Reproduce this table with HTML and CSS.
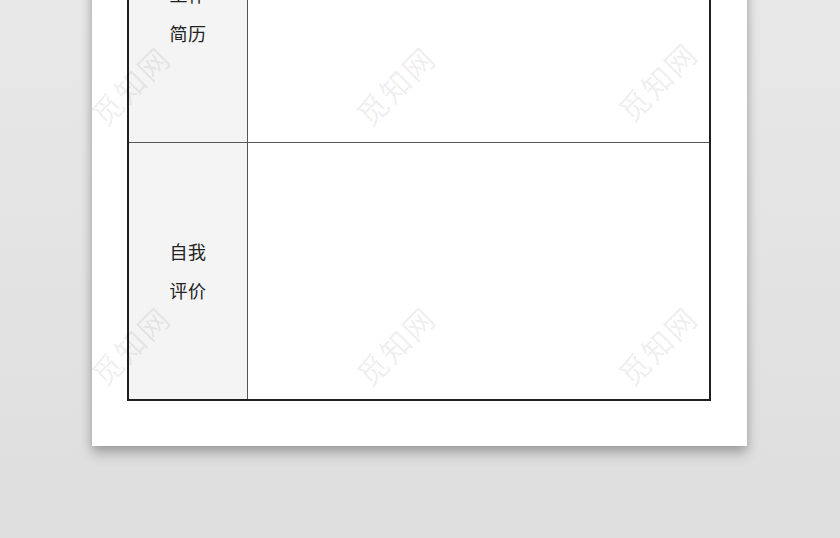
FILE: index.html
```html
<!DOCTYPE html>
<html lang="zh-CN">
<head>
<meta charset="utf-8">
<title>简历</title>
<link rel="stylesheet" href="styles.css">
</head>
<body>
<div class="stage">
  <div class="paper">
    <div class="table">
      <div class="row row-work">
        <div class="label"><span>工作</span><span>简历</span></div>
        <div class="content"></div>
      </div>
      <div class="row row-self">
        <div class="label"><span>自我</span><span>评价</span></div>
        <div class="content"></div>
      </div>
    </div>
    <span class="wm wm1">觅知网</span>
    <span class="wm wm2">觅知网</span>
    <span class="wm wm3">觅知网</span>
    <span class="wm wm4">觅知网</span>
    <span class="wm wm5">觅知网</span>
    <span class="wm wm6">觅知网</span>
  </div>
</div>
</body>
</html>
```

FILE: styles.css
```css
html, body {
  margin: 0;
  padding: 0;
  width: 840px;
  height: 538px;
  overflow: hidden;
}
body {
  background: linear-gradient(180deg, #e8e8e8 0%, #e2e2e2 60%, #dedede 100%);
  font-family: "Noto Sans CJK SC", "Noto Sans", sans-serif;
}
.stage {
  padding-left: 92px;
}
.paper {
  position: relative;
  width: 655px;
  margin-top: -151px;
  padding: 35px 36px 45px 35px;
  box-sizing: border-box;
  background: #fff;
  box-shadow: 0 8px 12px rgba(0, 0, 0, 0.22), 0 2px 8px rgba(0, 0, 0, 0.14);
}
.table {
  border: 2px solid #1e1e1e;
  display: flex;
  flex-direction: column;
}
.row {
  display: grid;
  grid-template-columns: 119px 1fr;
}
.row-work {
  height: 256px;
  border-bottom: 1px solid #555;
}
.row-self {
  height: 256px;
}
.label {
  background: #f4f4f4;
  border-right: 1px solid #555;
  display: flex;
  flex-direction: column;
  align-items: center;
  justify-content: center;
  font-size: 18px;
  line-height: 39px;
  color: #222;
  letter-spacing: 0.5px;
}
.content {
  background: #fff;
}
.wm {
  position: absolute;
  transform: translate(-50%, -50%) rotate(-45deg);
  font-size: 30px;
  letter-spacing: 2px;
  color: rgba(0, 0, 0, 0.075);
  white-space: nowrap;
  pointer-events: none;
}
.wm1 { left: 38px;  top: 236px; }
.wm2 { left: 303px; top: 236px; }
.wm3 { left: 565px; top: 232px; }
.wm4 { left: 38px;  top: 496px; }
.wm5 { left: 303px; top: 496px; }
.wm6 { left: 565px; top: 496px; }
```
